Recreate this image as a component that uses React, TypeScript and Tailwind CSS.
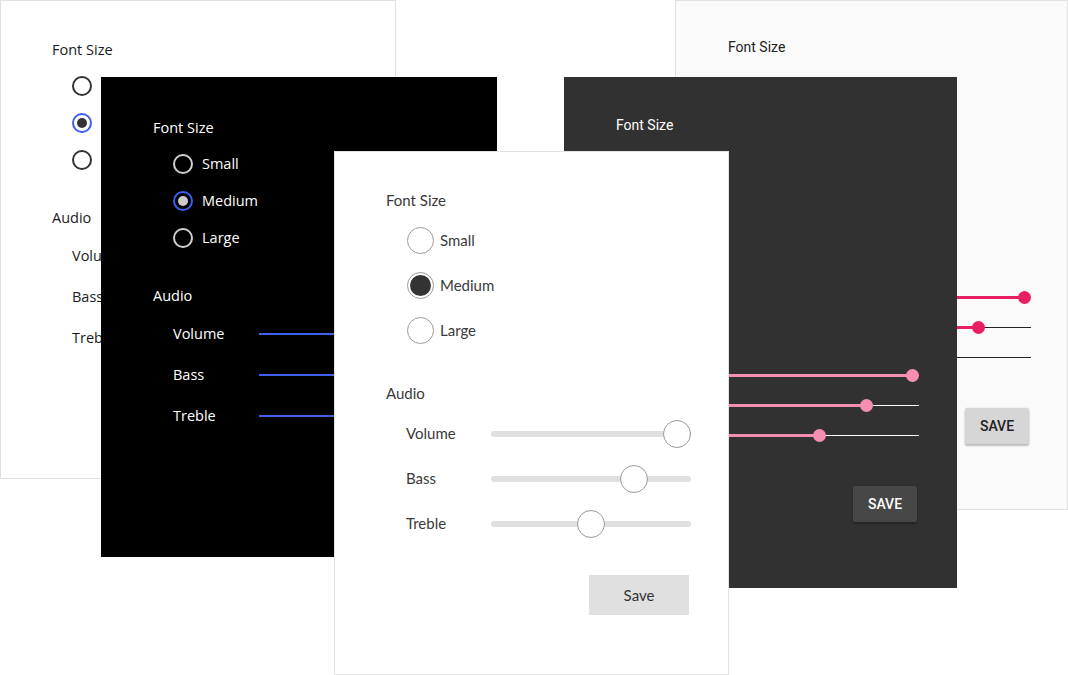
const sizes = ["Small", "Medium", "Large"];

const audio = [
  { label: "Volume", ubuntu: 100, material: 193 },
  { label: "Bass", ubuntu: 75, material: 147 },
  { label: "Treble", ubuntu: 50, material: 100 },
];

function WinRadio({ dark, checked }: { dark?: boolean; checked?: boolean }) {
  const ring = checked
    ? "border-[#3d5ef0]"
    : dark
      ? "border-[#cfcfcf]"
      : "border-[#333333]";
  return (
    <span
      className={`flex h-[20px] w-[20px] shrink-0 items-center justify-center rounded-full border-2 ${ring}`}
    >
      {checked && (
        <span
          className={`h-[10px] w-[10px] rounded-full ${dark ? "bg-[#cccccc]" : "bg-[#333333]"}`}
        />
      )}
    </span>
  );
}

function WindowsPanel({ dark, pad }: { dark?: boolean; pad: string }) {
  return (
    <div
      className={`${pad} font-['Open_Sans',sans-serif] text-[14.5px] ${dark ? "text-white" : "text-[#1b1b1b]"}`}
    >
      <p className="h-[20px] leading-[20px]">Font Size</p>
      <div className="ml-[20px] mt-[7px]">
        {sizes.map((s) => (
          <div key={s} className="flex h-[37px] items-center gap-[9px]">
            <WinRadio dark={dark} checked={s === "Medium"} />
            <span>{s}</span>
          </div>
        ))}
      </div>
      <p className="mt-[30px] h-[20px] leading-[20px]">Audio</p>
      <div className="ml-[20px] mt-[7px]">
        {audio.map((a) => (
          <div key={a.label} className="flex h-[41px] items-center">
            <span className="w-[86px]">{a.label}</span>
            <div className="h-[2px] w-[190px] bg-[#3f5fef]" />
          </div>
        ))}
      </div>
    </div>
  );
}

function UbuntuPanel() {
  return (
    <div className="pl-[51px] pr-[37px] pt-[38px] font-['Lato',sans-serif] text-[15px] text-[#3a3a3a]">
      <p className="h-[20px] leading-[20px]">Font Size</p>
      <div className="ml-[21px] mt-[8px]">
        {sizes.map((s) => (
          <div key={s} className="flex h-[45px] items-center gap-[6px]">
            <span className="flex h-[27px] w-[27px] items-center justify-center rounded-full border border-[#9a9a9a] bg-white">
              {s === "Medium" && (
                <span className="h-[21px] w-[21px] rounded-full bg-[#333333]" />
              )}
            </span>
            <span>{s}</span>
          </div>
        ))}
      </div>
      <p className="mt-[30px] h-[20px] leading-[20px]">Audio</p>
      <div className="ml-[20px] mt-[8px]">
        {audio.map((a) => (
          <div key={a.label} className="flex h-[45px] items-center">
            <span className="w-[85px]">{a.label}</span>
            <div className="relative h-[6px] w-[200px] rounded-full bg-[#e0e0e0]">
              <span
                className="absolute top-[-11px] h-[28px] w-[28px] rounded-full border border-[#9a9a9a] bg-white"
                style={{ left: (a.ubuntu / 100) * 172 }}
              />
            </div>
          </div>
        ))}
      </div>
      <div className="mt-[29px] flex justify-end pr-[2px]">
        <button className="h-[40px] w-[100px] bg-[#e0e0e0] text-[15px] text-[#333333]">
          Save
        </button>
      </div>
    </div>
  );
}

function MaterialPanel({ dark, top }: { dark?: boolean; top: string }) {
  const accent = dark ? "bg-[#f48fb1]" : "bg-[#e91e63]";
  const accentBorder = dark ? "border-[#f48fb1]" : "border-[#e91e63]";
  return (
    <div
      className={`${top} pl-[52px] font-['Roboto',sans-serif] text-[14px] ${dark ? "text-white" : "text-[#212121]"}`}
    >
      <p className="h-[20px] leading-[20px]">Font Size</p>
      <div className="ml-[20px] mt-[16px]">
        {sizes.map((s) => (
          <div key={s} className="flex h-[40px] items-center gap-[12px]">
            <span
              className={`flex h-[20px] w-[20px] items-center justify-center rounded-full border-2 ${s === "Medium" ? accentBorder : dark ? "border-white/70" : "border-black/55"}`}
            >
              {s === "Medium" && (
                <span className={`h-[10px] w-[10px] rounded-full ${accent}`} />
              )}
            </span>
            <span>{s}</span>
          </div>
        ))}
      </div>
      <p className="mt-[30px] h-[20px] leading-[20px]">Audio</p>
      <div className="ml-[20px] mt-[39px]">
        {audio.map((a) => (
          <div key={a.label} className="flex h-[30px] items-center">
            <span className="w-[83px]">{a.label}</span>
            <div className="relative h-[13px] w-[200px]">
              <span
                className={`absolute inset-x-0 top-[6px] h-[1px] ${dark ? "bg-white" : "bg-[#222222]"}`}
              />
              <span
                className={`absolute left-0 top-[5px] h-[3px] ${accent}`}
                style={{ width: a.material }}
              />
              <span
                className={`absolute top-0 h-[13px] w-[13px] rounded-full ${accent}`}
                style={{ left: a.material - 6.5 }}
              />
            </div>
          </div>
        ))}
      </div>
      <div className="mt-[36px] flex w-[303px] justify-end">
        <button
          className={`mr-[2px] h-[36px] w-[64px] rounded-[2px] text-[14px] font-medium shadow-[0_2px_2px_rgba(0,0,0,0.24),0_0_2px_rgba(0,0,0,0.12)] ${dark ? "bg-[#474747] text-white" : "bg-[#d6d6d6] text-[#212121]"}`}
        >
          SAVE
        </button>
      </div>
    </div>
  );
}

export default function App() {
  return (
    <div className="relative h-[675px] w-[1068px] overflow-hidden bg-white">
      <div className="absolute left-0 top-0 h-[479px] w-[396px] border border-[#e1e1e1] bg-white">
        <WindowsPanel pad="pl-[51px] pt-[39px]" />
      </div>

      <div className="absolute left-[675px] top-0 h-[510px] w-[393px] border border-[#e0e0e0] bg-[#fafafa]">
        <MaterialPanel top="pt-[36px]" />
      </div>

      <div className="absolute left-[101px] top-[77px] h-[480px] w-[396px] bg-black">
        <WindowsPanel dark pad="pl-[52px] pt-[41px]" />
      </div>

      <div className="absolute left-[564px] top-[77px] h-[511px] w-[393px] bg-[#313131]">
        <MaterialPanel dark top="pt-[38px]" />
      </div>

      <div className="absolute left-[334px] top-[151px] h-[524px] w-[395px] border border-[#e3e3e3] bg-white">
        <UbuntuPanel />
      </div>
    </div>
  );
}
